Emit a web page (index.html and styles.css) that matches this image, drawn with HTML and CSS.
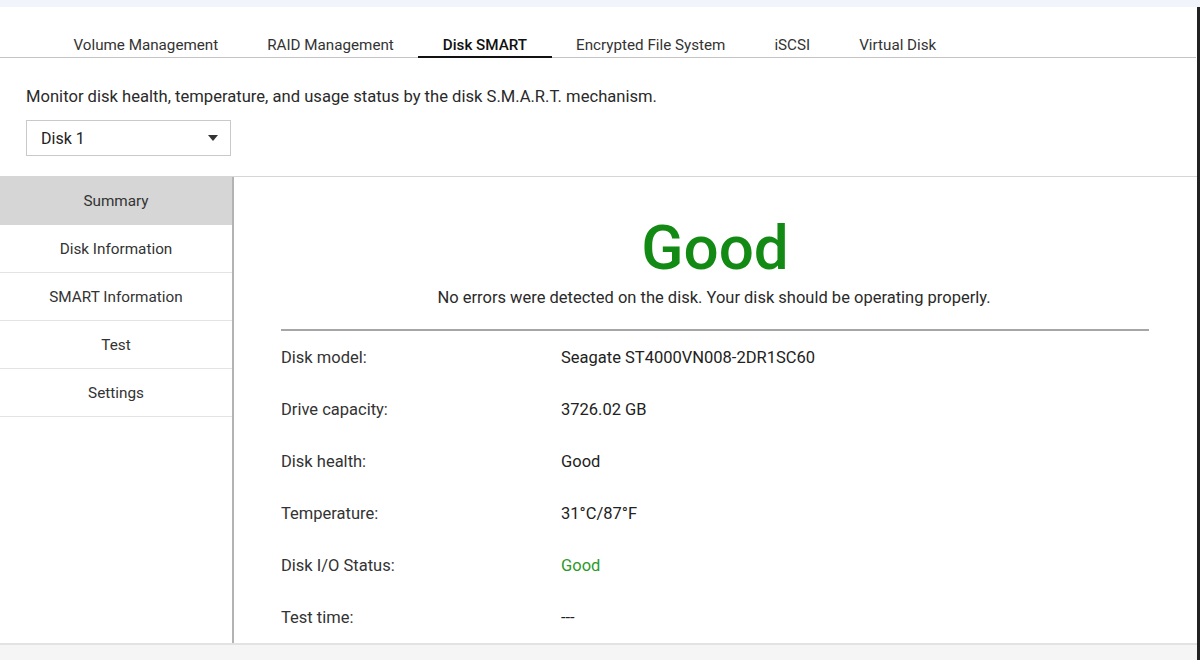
FILE: index.html
```html
<!DOCTYPE html>
<html>
<head>
<meta charset="utf-8">
<link rel="stylesheet" href="styles.css">
</head>
<body>
<div class="strip"></div>
<div class="window">
  <div class="tabs">
    <div class="tab">Volume Management</div>
    <div class="tab">RAID Management</div>
    <div class="tab active">Disk SMART</div>
    <div class="tab">Encrypted File System</div>
    <div class="tab">iSCSI</div>
    <div class="tab">Virtual Disk</div>
  </div>
  <div class="head">
    <p class="desc">Monitor disk health, temperature, and usage status by the disk S.M.A.R.T. mechanism.</p>
    <div class="select"><span>Disk 1</span><span class="caret"></span></div>
  </div>
  <div class="body">
    <div class="side">
      <div class="item sel">Summary</div>
      <div class="item">Disk Information</div>
      <div class="item">SMART Information</div>
      <div class="item">Test</div>
      <div class="item">Settings</div>
    </div>
    <div class="main">
      <div class="status">Good</div>
      <div class="sub">No errors were detected on the disk. Your disk should be operating properly.</div>
      <div class="rows">
        <div class="row"><span class="lbl">Disk model:</span><span class="val">Seagate ST4000VN008-2DR1SC60</span></div>
        <div class="row"><span class="lbl">Drive capacity:</span><span class="val">3726.02 GB</span></div>
        <div class="row"><span class="lbl">Disk health:</span><span class="val">Good</span></div>
        <div class="row"><span class="lbl">Temperature:</span><span class="val">31°C/87°F</span></div>
        <div class="row"><span class="lbl">Disk I/O Status:</span><span class="val green">Good</span></div>
        <div class="row"><span class="lbl">Test time:</span><span class="val">---</span></div>
      </div>
    </div>
  </div>
  <div class="foot"></div>
</div>
</body>
</html>
```
FILE: styles.css
```css
html, body { margin: 0; padding: 0; }
body {
  width: 1200px;
  height: 660px;
  overflow: hidden;
  background: #fff;
  font-family: Roboto, "Liberation Sans", sans-serif;
  color: #2a2a2a;
}
.strip { height: 7px; background: #f1f4fb; }
.window {
  height: 653px;
  border-right: 3px solid #222;
  display: flex;
  flex-direction: column;
  box-sizing: border-box;
}
.tabs {
  flex-shrink: 0;
  display: flex;
  height: 50px;
  align-items: flex-end;
  padding-left: 49px;
  border-bottom: 1px solid #c4c4c4;
  margin-right: 1px;
}
.tab {
  font-size: 15.2px;
  padding: 0 24.5px 2px;
  color: #333;
  line-height: 18px;
  border-bottom: 2px solid transparent;
  margin-bottom: -1px;
}
.tab.active { border-bottom-color: #111; font-weight: 500; color: #111; }
.head {
  flex-shrink: 0;
  padding: 30px 26px 20px;
  border-bottom: 1px solid #d6d6d6;
}
.desc { margin: 0 0 14px; font-size: 16.6px; line-height: 18px; color: #2a2a2a; }
.select {
  height: 34px;
  border: 1px solid #c9c9c9;
  display: flex;
  align-items: center;
  justify-content: space-between;
  padding: 0 12px 0 14px;
  width: 177px;
  font-size: 16px;
  color: #222;
}
.caret {
  width: 0; height: 0;
  border-left: 5px solid transparent;
  border-right: 5px solid transparent;
  border-top: 6px solid #333;
}
.body { flex: 1; display: flex; overflow: hidden; min-height: 0; }
.side {
  width: 232px;
  border-right: 2px solid #b3b3b3;
}
.item {
  height: 47px;
  border-bottom: 1px solid #e3e3e3;
  display: flex;
  align-items: center;
  justify-content: center;
  font-size: 15.3px;
  color: #333;
}
.item.sel { background: #d6d6d6; border-bottom-color: #d6d6d6; }
.main { flex: 1; padding: 39px 48px 0 47px; }
.status {
  text-align: center;
  font-size: 62px;
  line-height: 64px;
  font-weight: 500;
  color: #138a13;
}
.sub { text-align: center; font-size: 16.5px; line-height: 18px; margin-top: 9px; color: #2a2a2a; padding-right: 2px; }
.rows { margin-top: 22px; border-top: 2px solid #a6a6a6; padding-top: 0; }
.row { height: 52px; display: flex; align-items: center; font-size: 16.5px; }
.lbl { width: 280px; color: #333; }
.val { color: #222; }
.green { color: #2a9a2a; }
.foot { flex-shrink: 0; height: 15px; border-top: 2px solid #e2e2e2; background: #f5f5f5; }
```
